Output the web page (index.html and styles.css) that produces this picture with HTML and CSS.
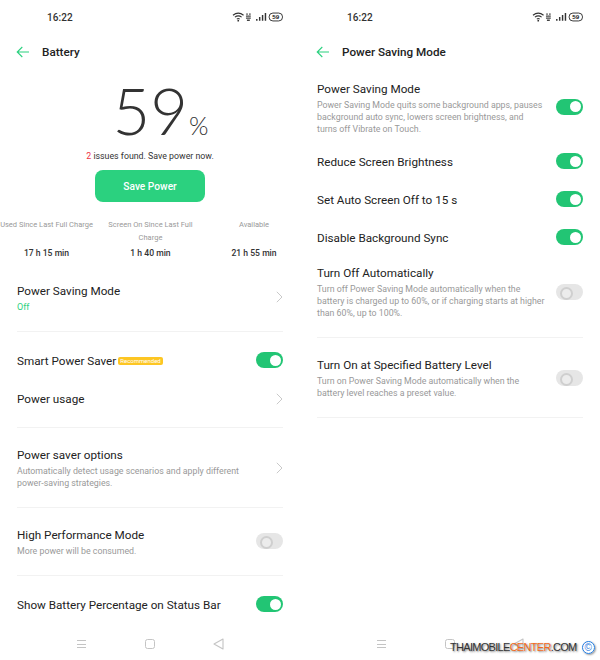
FILE: index.html
```html
<!DOCTYPE html>
<html lang="en">
<head>
<meta charset="utf-8">
<title>Battery</title>
<link rel="stylesheet" href="styles.css">
</head>
<body>
<svg class="defs" width="0" height="0" aria-hidden="true">
  <symbol id="status" viewBox="0 0 54 10">
    <path d="M1 3.2C4.5 .4 8.5 .4 12 3.2M3 5.2c2.3-1.8 4.7-1.8 7 0M5 7.2c1-.8 2-.8 3 0" fill="none" stroke="#333" stroke-width="1.1"/>
    <circle cx="6.5" cy="8.8" r=".9" fill="#333"/>
    <path d="M15 1h1.200v2H15zM18 1h1.200v2H18zM14.500 3.500h5v1.200h-5zM14.500 5.500h5v1.200h-5zM15.500 7.500h3v1.600h-3z" fill="#444"/>
    <path d="M25 7h1.500v2H25zM28 5h1.500v4H28zM31 3h1.500v6H31zM34 .8h1.500V9H34z" fill="#333"/>
    <rect x="38.500" y=".9" width="14" height="8.200" rx="4" fill="none" stroke="#333" stroke-width="1"/>
    <text x="45.500" y="7.600" text-anchor="middle" class="batt">59</text>
  </symbol>
  <symbol id="back" viewBox="0 0 14 12">
    <path d="M13 6H1.500M6.300 1 1.200 6l5.100 5" fill="none" stroke="#2bd17f" stroke-width="1.100"/>
  </symbol>
  <symbol id="chev" viewBox="0 0 7 12">
    <path d="M.8.8 6 6 .8 11.200" fill="none" stroke="#c9c9c9" stroke-width="1"/>
  </symbol>
</svg>

<main class="page">
  <section class="screen">
    <div class="status"><span class="time">16:22</span><svg class="status-icons"><use href="#status"/></svg></div>
    <header class="head"><svg class="back"><use href="#back"/></svg><h1 class="head-title">Battery</h1></header>

    <div class="level"><span class="digits">59</span><span class="pct">%</span></div>
    <p class="issues"><span class="red">2</span> issues found. Save power now.</p>
    <div class="btn">Save Power</div>

    <div class="stats">
      <div class="stat"><p class="stat-label">Used Since Last Full Charge</p><p class="stat-value">17 h 15 min</p></div>
      <div class="stat"><p class="stat-label">Screen On Since Last Full Charge</p><p class="stat-value">1 h 40 min</p></div>
      <div class="stat"><p class="stat-label">Available</p><p class="stat-value">21 h 55 min</p></div>
    </div>

    <div class="row h-psm line">
      <div class="text up"><p class="title">Power Saving Mode</p><p class="off">Off</p></div>
      <svg class="chev"><use href="#chev"/></svg>
    </div>

    <div class="row h-38 gap-top">
      <div class="text inline"><p class="title">Smart Power Saver</p><span class="tag">Recommended</span></div>
      <span class="toggle on lift"></span>
    </div>
    <div class="row h-47 line">
      <div class="text up9"><p class="title">Power usage</p></div>
      <svg class="chev up9"><use href="#chev"/></svg>
    </div>

    <div class="row h-79 line">
      <div class="text"><p class="title">Power saver options</p><p class="desc">Automatically detect usage scenarios and apply different<br>power-saving strategies.</p></div>
      <svg class="chev"><use href="#chev"/></svg>
    </div>

    <div class="row h-67 line">
      <div class="text"><p class="title">High Performance Mode</p><p class="desc">More power will be consumed.</p></div>
      <span class="toggle lift"></span>
    </div>

    <div class="row h-38 gap-top">
      <div class="text"><p class="title">Show Battery Percentage on Status Bar</p></div>
      <span class="toggle on lift"></span>
    </div>

    <nav class="nav">
      <span class="nav-menu"></span><span class="nav-home"></span>
      <svg class="nav-back" viewBox="0 0 11 12"><path d="M10 1v10L1 6z" fill="none" stroke="#c4c4c4" stroke-width="1.100" stroke-linejoin="round"/></svg>
    </nav>
  </section>

  <section class="screen">
    <div class="status"><span class="time">16:22</span><svg class="status-icons"><use href="#status"/></svg></div>
    <header class="head"><svg class="back"><use href="#back"/></svg><h1 class="head-title">Power Saving Mode</h1></header>

    <div class="row r-first">
      <div class="text"><p class="title">Power Saving Mode</p><p class="desc">Power Saving Mode quits some background apps, pauses<br>background auto sync, lowers screen brightness, and<br>turns off Vibrate on Touch.</p></div>
      <span class="toggle on lift-3"></span>
    </div>
    <div class="row h-38"><div class="text"><p class="title">Reduce Screen Brightness</p></div><span class="toggle on lift"></span></div>
    <div class="row h-38"><div class="text"><p class="title">Set Auto Screen Off to 15 s</p></div><span class="toggle on lift"></span></div>
    <div class="row h-38"><div class="text"><p class="title">Disable Background Sync</p></div><span class="toggle on lift"></span></div>
    <div class="row r-auto line">
      <div class="text"><p class="title">Turn Off Automatically</p><p class="desc">Turn off Power Saving Mode automatically when the<br>battery is charged up to 60%, or if charging starts at higher<br>than 60%, up to 100%.</p></div>
      <span class="toggle"></span>
    </div>
    <div class="row r-level line">
      <div class="text"><p class="title">Turn On at Specified Battery Level</p><p class="desc">Turn on Power Saving Mode automatically when the<br>battery level reaches a preset value.</p></div>
      <span class="toggle"></span>
    </div>

    <nav class="nav">
      <span class="nav-menu"></span><span class="nav-home"></span>
      <svg class="nav-back" viewBox="0 0 11 12"><path d="M10 1v10L1 6z" fill="none" stroke="#c4c4c4" stroke-width="1.100" stroke-linejoin="round"/></svg>
    </nav>
  </section>

  <div class="mark"><span class="mark-text">THAIMOBILE<span class="orange">CENTER</span>.COM</span><span class="copy">©</span></div>
</main>
</body>
</html>
```

FILE: styles.css
```css
* { box-sizing: border-box; }
html, body { margin: 0; padding: 0; background: #fff; }
body { font-family: Roboto, "Liberation Sans", sans-serif; color: #222; }
p, h1 { margin: 0; font-weight: 400; }
.defs { position: absolute; }
.batt { font: 700 6.5px "Liberation Sans", sans-serif; fill: #222; }

.page { position: relative; display: flex; width: 600px; height: 660px; overflow: hidden; }
.screen { width: 300px; height: 660px; display: flex; flex-direction: column; position: relative; }

.status { height: 34px; display: flex; align-items: center; justify-content: space-between; padding: 0 16px 0 47px; }
.time { font-size: 10px; font-weight: 500; color: #333; letter-spacing: .1px; }
.status-icons { width: 52px; height: 10px; }

.head { height: 34px; padding-top: 1px; display: flex; align-items: center; padding-left: 16px; }
.back { width: 14px; height: 12px; margin-right: 12px; }
.head-title { font-size: 11.700px; font-weight: 500; color: #222; }

.level { height: 86px; display: flex; align-items: flex-end; justify-content: center; margin-top: 1px; padding-left: 21px; padding-bottom: 12px; font-family: Lato, sans-serif; color: #333; }
.digits { font-size: 65px; line-height: 65px; font-weight: 300; }
.pct { font-size: 25px; line-height: 25px; font-weight: 300; margin-left: 1px; margin-bottom: 5px; }

.issues { font-size: 8.800px; line-height: 12px; text-align: center; color: #333; margin-top: -5px; }
.red { color: #ee3344; }
.btn { width: 110px; height: 32px; margin: 8px auto 0; background: #2bd17f; border-radius: 8px; color: #fff; font-size: 10.200px; font-weight: 500; display: flex; align-items: center; justify-content: center; }

.stats { display: grid; grid-template-columns: 93px 1fr 92px; margin-top: 16px; height: 45px; }
.stat { text-align: center; display: flex; flex-direction: column; }
.stat:nth-child(2) { padding: 0 12px; }
.stat-label { font-size: 7.500px; line-height: 13px; color: #999; height: 26px; }
.stat-value { font-size: 8.600px; line-height: 12px; font-weight: 500; color: #333; margin-top: 3px; }

.row { display: flex; align-items: center; justify-content: space-between; margin: 0 17px; flex: none; }
.line { border-bottom: 1px solid #f2f2f2; }
.h-psm { height: 69px; }
.h-38 { height: 38px; }
.h-47 { height: 48px; }
.h-79 { height: 80px; }
.h-67 { height: 68px; }
.gap-top { margin-top: 10px; }

.text.up { margin-top: 2px; }
.up9 { margin-bottom: 10px; }
.text.inline { display: flex; align-items: center; gap: 2px; }

.title { font-size: 11.700px; line-height: 16px; color: #222; }
.off { font-size: 9px; line-height: 14px; color: #2bd17f; margin-top: 1px; }
.desc { font-size: 8.800px; line-height: 12px; color: #999; margin-top: 2px; }

.tag { background: #fdc623; color: #fff; font-size: 6px; line-height: 8px; padding: 0 2px; border-radius: 2px; }

.toggle { width: 27px; height: 16px; border-radius: 8px; background: #e6e6e6; position: relative; flex: none; }
.toggle::after { content: ""; position: absolute; top: 3.500px; left: 3.500px; width: 9px; height: 9px; border-radius: 50%; background: #ececec; border: 2px solid #cfcfcf; }
.toggle.on { background: #22c574; }
.toggle.on::after { left: auto; right: 2.500px; top: 2.500px; width: 11px; height: 11px; background: #fff; border: 0; }
.lift { margin-bottom: 2px; }
.lift-3 { margin-bottom: 3px; }

.chev { width: 7px; height: 12px; flex: none; }

.r-first { height: 70px; margin-top: 5px; }
.r-auto { height: 81px; padding-bottom: 11px; }
.r-level { height: 80px; }

.nav { position: absolute; left: 0; right: 0; top: 637px; height: 14px; display: flex; align-items: center; }
.nav-menu { position: absolute; left: 77px; top: 3px; width: 9px; height: 8px; border-top: 1px solid #c4c4c4; border-bottom: 1px solid #c4c4c4; background: linear-gradient(#c4c4c4, #c4c4c4) center / 100% 1px no-repeat; }
.nav-home { position: absolute; left: 145px; top: 2px; width: 10px; height: 10px; border: 1.100px solid #c4c4c4; border-radius: 2.500px; }
.nav-back { position: absolute; left: 213px; top: 1px; width: 11px; height: 12px; }

.mark { position: absolute; left: 450px; top: 640px; display: flex; align-items: center; }
.mark-text { font-family: "Liberation Sans", sans-serif; font-size: 11px; line-height: 15px; letter-spacing: -.7px; color: #333; text-shadow: 1px 1px 2px #777; }
.orange { color: #f26a1b; }
.copy { display: block; margin-left: 5px; width: 13px; height: 13px; border-radius: 50%; border: 1.300px solid #1f7ae0; color: #1f7ae0; font: 10px/11px "Liberation Sans", sans-serif; text-align: center; box-shadow: 1px 1px 2px #999; }
```
